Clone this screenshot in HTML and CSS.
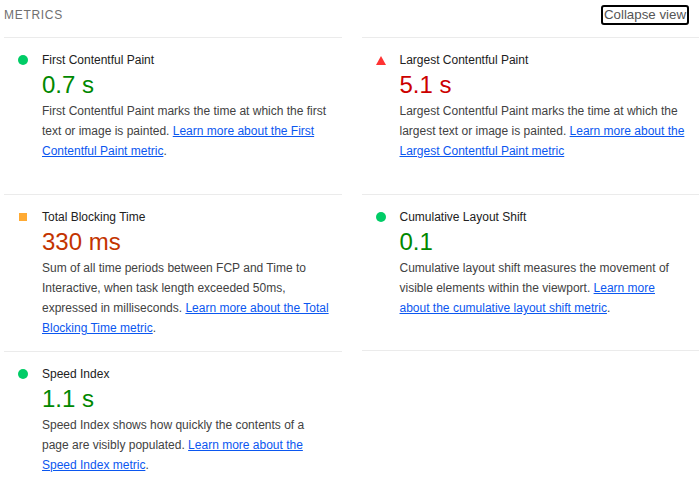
FILE: index.html
```html
<!DOCTYPE html>
<html lang="en">
<head>
<meta charset="utf-8">
<title>Metrics</title>
<link rel="stylesheet" href="styles.css">
</head>
<body>
<section class="metrics">
  <header class="metrics-header">
    <h2 class="metrics-title">Metrics</h2>
    <button class="collapse-btn" type="button">Collapse view</button>
  </header>
  <div class="metrics-grid">
    <div class="metric">
      <span class="icon icon-pass"></span>
      <div class="metric-title">First Contentful Paint</div>
      <div class="metric-value value-pass">0.7&nbsp;s</div>
      <p class="metric-desc">First Contentful Paint marks the time at which the first text or image is painted. <a href="#">Learn more about the First Contentful Paint metric</a>.</p>
    </div>
    <div class="metric">
      <span class="icon icon-fail"><svg width="10" height="9" viewBox="0 0 10 9"><polygon points="5,0 10,9 0,9" fill="#ff3333"/></svg></span>
      <div class="metric-title">Largest Contentful Paint</div>
      <div class="metric-value value-fail">5.1&nbsp;s</div>
      <p class="metric-desc">Largest Contentful Paint marks the time at which the largest text or image is painted. <a href="#">Learn more about the Largest Contentful Paint metric</a></p>
    </div>
    <div class="metric">
      <span class="icon icon-average"></span>
      <div class="metric-title">Total Blocking Time</div>
      <div class="metric-value value-average">330&nbsp;ms</div>
      <p class="metric-desc">Sum of all time periods between FCP and Time to Interactive, when task length exceeded 50ms, expressed in milliseconds. <a href="#">Learn more about the Total Blocking Time metric</a>.</p>
    </div>
    <div class="metric metric-last">
      <span class="icon icon-pass"></span>
      <div class="metric-title">Cumulative Layout Shift</div>
      <div class="metric-value value-pass">0.1</div>
      <p class="metric-desc">Cumulative layout shift measures the movement of visible elements within the viewport. <a href="#">Learn more about the cumulative layout shift metric</a>.</p>
    </div>
    <div class="metric metric-last">
      <span class="icon icon-pass"></span>
      <div class="metric-title">Speed Index</div>
      <div class="metric-value value-pass">1.1&nbsp;s</div>
      <p class="metric-desc">Speed Index shows how quickly the contents of a page are visibly populated. <a href="#">Learn more about the Speed Index metric</a>.</p>
    </div>
  </div>
</section>
</body>
</html>
```
FILE: styles.css
```css
html, body {
  margin: 0;
  padding: 0;
  background: #ffffff;
}

body {
  font-family: "Liberation Sans", Arial, sans-serif;
  color: #212121;
  overflow: hidden;
}

.metrics {
  padding-left: 4px;
}

.metrics-header {
  display: flex;
  justify-content: space-between;
  align-items: flex-start;
  height: 37px;
  box-sizing: border-box;
  padding-top: 5px;
}

.metrics-title {
  margin: 0;
  font-size: 12px;
  font-weight: normal;
  line-height: 20px;
  letter-spacing: 0.7px;
  text-transform: uppercase;
  color: #707070;
}

.collapse-btn {
  margin: 0 10px 0 0;
  padding: 0 1px;
  height: 20px;
  box-sizing: border-box;
  border: 2px solid #000000;
  border-radius: 3px;
  background: #ffffff;
  font-family: "Liberation Sans", Arial, sans-serif;
  font-size: 13.3px;
  line-height: 16px;
  color: #555555;
}

.metrics-grid {
  display: grid;
  grid-template-columns: 1fr 1fr;
  grid-auto-rows: 157px;
  column-gap: 20px;
}

.metric {
  display: grid;
  grid-template-columns: 12px 1fr;
  grid-template-rows: 20px 29px auto;
  column-gap: 13px;
  align-content: start;
  box-sizing: border-box;
  padding: 12px 12px 12px 13px;
  border-top: 1px solid #ebebeb;
}

.metric-last:nth-child(4) {
  border-bottom: 1px solid #ebebeb;
}

.icon {
  grid-column: 1;
  grid-row: 1;
  display: flex;
  align-items: center;
  justify-content: center;
}

.icon-pass::before {
  content: "";
  width: 10px;
  height: 10px;
  border-radius: 50%;
  background: #00cc66;
}

.icon-average::before {
  content: "";
  width: 8px;
  height: 8px;
  background: #ffaa33;
}

.icon-fail svg {
  display: block;
}

.metric-title {
  grid-column: 2;
  grid-row: 1;
  font-size: 12px;
  line-height: 20px;
  color: #212121;
}

.metric-value {
  grid-column: 2;
  grid-row: 2;
  font-size: 24px;
  line-height: 29px;
}

.value-pass { color: #008800; }
.value-fail { color: #cc0000; }
.value-average { color: #c33300; }

.metric-desc {
  grid-column: 2;
  grid-row: 3;
  margin: 2px 0 0 0;
  font-size: 12px;
  line-height: 20px;
  color: #424242;
}

.metric-desc a {
  color: #0b57f0;
  text-decoration: underline;
}
```
